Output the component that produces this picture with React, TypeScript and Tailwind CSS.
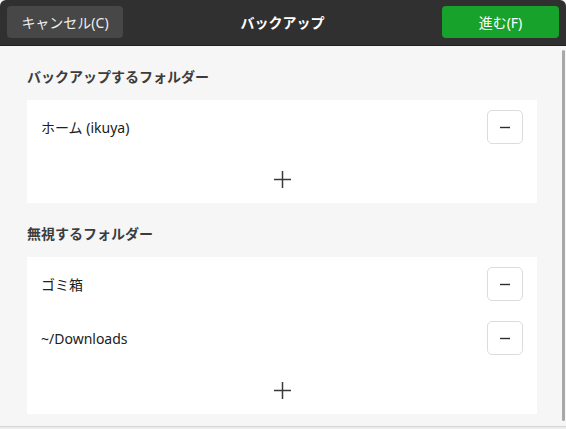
const font = {
  fontFamily: '"Noto Sans", "Noto Sans CJK JP", sans-serif',
};

const MinusIcon = () => (
  <svg width="10" height="10" viewBox="0 0 10 10" className="text-[#2e2e2e]">
    <path d="M0 5.5h10" stroke="currentColor" strokeWidth="1.4" />
  </svg>
);

const PlusIcon = () => (
  <svg width="17" height="17" viewBox="0 0 17 17" className="text-[#3a3a3a]">
    <path d="M0 8.5h17M8.5 0v17" stroke="currentColor" strokeWidth="1.5" />
  </svg>
);

const FolderRow = ({ label }: { label: string }) => (
  <div className="flex h-[54px] items-center justify-between pl-[14px] pr-[14px]">
    <span className="text-[14px] text-[#202020]">{label}</span>
    <button className="flex h-[34px] w-[36px] items-center justify-center rounded-[5px] border border-[#dcdcdc] bg-white">
      <MinusIcon />
    </button>
  </div>
);

const AddRow = () => (
  <div className="flex h-[49px] items-center justify-center pt-[2px]">
    <PlusIcon />
  </div>
);

const Section = ({ title, rows }: { title: string; rows: string[] }) => (
  <div>
    <h2 className="mb-[13px] h-[20px] text-[14px] font-bold leading-[20px] text-[#3c3c3c]">{title}</h2>
    <div className="bg-white">
      {rows.map((r) => (
        <FolderRow key={r} label={r} />
      ))}
      <AddRow />
    </div>
  </div>
);

export default function App() {
  return (
    <div className="relative flex h-[429px] w-[566px] flex-col overflow-hidden bg-[#f6f6f6]" style={font}>
      {/* header bar */}
      <header className="flex h-[46px] shrink-0 items-center justify-between rounded-t-[6px] border-b border-[#202020] bg-[#303030] px-[7px] pb-[1px]">
        <button className="h-[32px] w-[116px] rounded-[4px] bg-[#474747] text-[14px] text-[#eeeeee]">
          キャンセル(C)
        </button>
        <h1 className="text-[14px] font-bold text-white">バックアップ</h1>
        <button className="h-[32px] w-[117px] rounded-[4px] bg-[#17a22c] text-[14px] text-white">
          進む(F)
        </button>
      </header>

      {/* content */}
      <div className="flex flex-1 flex-col gap-[21px] pl-[27px] pr-[29px] pt-[21px]">
        <Section title="バックアップするフォルダー" rows={["ホーム (ikuya)"]} />
        <Section title="無視するフォルダー" rows={["ゴミ箱", "~/Downloads"]} />
      </div>

      {/* bottom edge */}
      <div className="h-[3px] shrink-0 border-t border-[#d6d6d6] bg-[#ececec]" />

      {/* scrollbar */}
      <div className="absolute right-[1px] top-[50px] h-[371px] w-[3px] rounded-full bg-[#a8a8a8]" />
    </div>
  );
}
